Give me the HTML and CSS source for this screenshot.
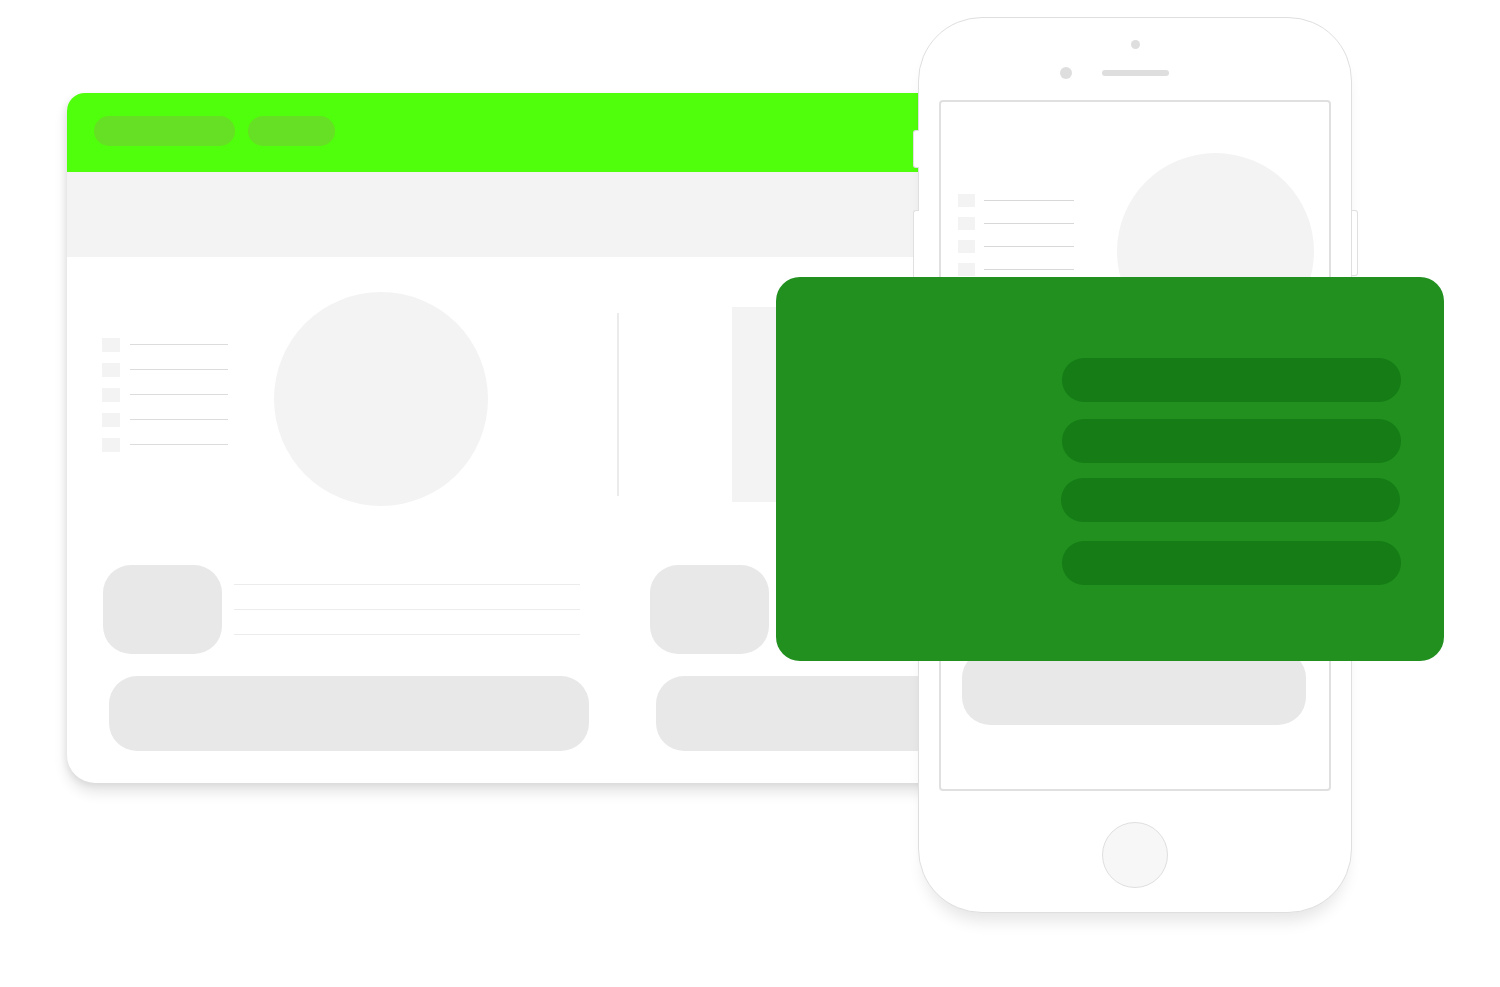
FILE: index.html
```html
<!DOCTYPE html>
<html lang="en">
<head>
<meta charset="utf-8">
<title>Devices illustration</title>
<link rel="stylesheet" href="styles.css">
</head>
<body>
<div class="stage">
  <div class="browser">
    <div class="browser-header">
      <span class="tab tab-wide"></span>
      <span class="tab tab-short"></span>
    </div>
    <div class="browser-toolbar"></div>
    <div class="browser-body">
      <div class="hero">
        <div class="list">
          <div class="list-row"><span class="sq"></span><span class="ln"></span></div>
          <div class="list-row"><span class="sq"></span><span class="ln"></span></div>
          <div class="list-row"><span class="sq"></span><span class="ln"></span></div>
          <div class="list-row"><span class="sq"></span><span class="ln"></span></div>
          <div class="list-row"><span class="sq"></span><span class="ln"></span></div>
        </div>
        <div class="circle"></div>
        <div class="divider"></div>
        <div class="panel"></div>
      </div>
      <div class="cards">
        <div class="card-col">
          <div class="media">
            <div class="thumb"></div>
            <div class="lines"><span></span><span></span><span></span></div>
          </div>
          <div class="pill"></div>
        </div>
        <div class="card-col">
          <div class="media">
            <div class="thumb"></div>
            <div class="lines"><span></span><span></span><span></span></div>
          </div>
          <div class="pill"></div>
        </div>
      </div>
    </div>
  </div>

  <div class="phone">
    <span class="side side-mute"></span>
    <span class="side side-vol"></span>
    <span class="side side-power"></span>
    <div class="phone-dot"></div>
    <div class="phone-top">
      <span class="front-cam"></span>
      <span class="speaker"></span>
    </div>
    <div class="screen">
      <div class="m-hero">
        <div class="m-list">
          <div class="m-row"><span class="m-sq"></span><span class="m-ln"></span></div>
          <div class="m-row"><span class="m-sq"></span><span class="m-ln"></span></div>
          <div class="m-row"><span class="m-sq"></span><span class="m-ln"></span></div>
          <div class="m-row"><span class="m-sq"></span><span class="m-ln"></span></div>
          <div class="m-row"><span class="m-sq"></span><span class="m-ln"></span></div>
        </div>
        <div class="m-circle"></div>
      </div>
      <div class="m-media">
        <div class="thumb"></div>
        <div class="m-lines"><span></span><span></span><span></span></div>
      </div>
      <div class="m-pill"></div>
    </div>
    <div class="home"></div>
  </div>

  <div class="menu-card">
    <span class="bar bar-1"></span>
    <span class="bar bar-2"></span>
    <span class="bar bar-3"></span>
    <span class="bar bar-4"></span>
  </div>
</div>
</body>
</html>
```

FILE: styles.css
```css
* { box-sizing: border-box; }
html, body { margin: 0; padding: 0; background: #ffffff; }
body { font-family: "Liberation Sans", Arial, sans-serif; }

.stage {
  position: relative;
  width: 1500px;
  height: 987px;
  overflow: hidden;
  background: #ffffff;
}

/* ---------- Browser window ---------- */
.browser {
  position: absolute;
  left: 67px;
  top: 93px;
  width: 1160px;
  height: 690px;
  background: #ffffff;
  border-radius: 18px 18px 28px 28px;
  box-shadow: 0 9px 14px rgba(0, 0, 0, 0.11), -2px 2px 6px rgba(0, 0, 0, 0.06);
  overflow: hidden;
  display: flex;
  flex-direction: column;
}
.browser-header {
  height: 79px;
  background: #50ff0b;
  display: flex;
  align-items: flex-start;
  gap: 13px;
  padding: 23px 0 0 27px;
}
.tab {
  display: block;
  height: 30px;
  border-radius: 15px;
  background: #66e024;
}
.tab-wide { width: 141px; }
.tab-short { width: 87px; }
.browser-toolbar {
  height: 85px;
  background: #f3f3f3;
}
.browser-body {
  flex: 1;
  display: flex;
  flex-direction: column;
}
.hero {
  display: flex;
  align-items: center;
  height: 214px;
  margin-top: 35px;
  padding-left: 35px;
}
.list {
  display: flex;
  flex-direction: column;
  gap: 11px;
  margin-bottom: 9px;
}
.list-row {
  display: flex;
  align-items: center;
  gap: 10px;
}
.sq {
  display: block;
  width: 18px;
  height: 14px;
  background: #f3f3f3;
}
.ln {
  display: block;
  width: 98px;
  height: 1px;
  background: #dcdcdc;
}
.circle {
  width: 214px;
  height: 214px;
  border-radius: 50%;
  background: #f3f3f3;
  margin-left: 46px;
  flex: none;
}
.divider {
  width: 2px;
  height: 183px;
  background: #ebebeb;
  margin-left: 129px;
  margin-top: 10px;
  flex: none;
}
.panel {
  width: 300px;
  height: 195px;
  background: #f3f3f3;
  margin-left: 113px;
  margin-top: 10px;
  flex: none;
}
.cards {
  display: grid;
  grid-template-columns: 547px 547px;
  margin-top: 59px;
  padding-left: 36px;
}
.card-col {
  display: flex;
  flex-direction: column;
}
.media {
  display: flex;
  align-items: flex-start;
}
.thumb {
  width: 119px;
  height: 89px;
  border-radius: 28px;
  background: #e8e8e8;
  flex: none;
}
.lines {
  display: flex;
  flex-direction: column;
  gap: 24px;
  margin-left: 12px;
  padding-top: 19px;
}
.lines span {
  display: block;
  width: 346px;
  height: 1px;
  background: #ececec;
}
.pill {
  width: 480px;
  height: 75px;
  border-radius: 28px;
  background: #e8e8e8;
  margin-top: 22px;
  margin-left: 6px;
}

/* ---------- Phone ---------- */
.phone {
  position: absolute;
  left: 918px;
  top: 17px;
  width: 434px;
  height: 896px;
  background: #ffffff;
  border: 1.5px solid #dfdfdf;
  border-radius: 64px;
  box-shadow: 0 14px 16px -6px rgba(0, 0, 0, 0.1);
  display: flex;
  flex-direction: column;
  align-items: center;
}
.side {
  position: absolute;
  width: 6px;
  background: #ffffff;
  border: 1.5px solid #e0e0e0;
}
.side-mute {
  left: -6.5px;
  top: 112px;
  height: 38px;
  border-right: none;
  border-radius: 3px 0 0 3px;
}
.side-vol {
  left: -6.5px;
  top: 192px;
  height: 70px;
  border-right: none;
  border-radius: 3px 0 0 3px;
}
.side-power {
  right: -6.5px;
  top: 192px;
  height: 66px;
  border-left: none;
  border-radius: 0 3px 3px 0;
}
.phone-dot {
  width: 9px;
  height: 9px;
  border-radius: 50%;
  background: #dedede;
  margin-top: 22px;
  flex: none;
}
.phone-top {
  display: grid;
  grid-template-columns: 1fr 67px 1fr;
  align-items: center;
  width: 100%;
  height: 12px;
  margin-top: 18px;
  flex: none;
}
.front-cam {
  justify-self: end;
  width: 12px;
  height: 12px;
  border-radius: 50%;
  background: #dedede;
  margin-right: 30px;
}
.speaker {
  display: block;
  width: 67px;
  height: 6px;
  border-radius: 3px;
  background: #dedede;
}
.screen {
  width: 392px;
  height: 691px;
  margin-top: 21px;
  border: 2px solid #e0e0e0;
  border-radius: 4px;
  background: #ffffff;
  flex: none;
  display: flex;
  flex-direction: column;
  align-items: center;
}
.m-hero {
  display: flex;
  align-items: center;
  align-self: stretch;
  padding-left: 17px;
  margin-top: 51px;
}
.m-list {
  display: flex;
  flex-direction: column;
  gap: 10px;
  margin-bottom: 10px;
}
.m-row {
  display: flex;
  align-items: center;
  gap: 9px;
}
.m-sq {
  display: block;
  width: 17px;
  height: 13px;
  background: #f3f3f3;
}
.m-ln {
  display: block;
  width: 90px;
  height: 1px;
  background: #d8d8d8;
}
.m-circle {
  width: 197px;
  height: 197px;
  border-radius: 50%;
  background: #f3f3f3;
  margin-left: 43px;
  flex: none;
}
.m-media {
  display: flex;
  align-items: flex-start;
  width: 344px;
  margin-top: 40px;
}
.m-lines {
  display: flex;
  flex-direction: column;
  gap: 24px;
  margin-left: 12px;
  padding-top: 19px;
}
.m-lines span {
  display: block;
  width: 200px;
  height: 1px;
  background: #ececec;
}
.m-pill {
  width: 344px;
  height: 75px;
  border-radius: 28px;
  background: #e8e8e8;
  margin-top: 171px;
  margin-left: -3px;
  flex: none;
}
.home {
  width: 66px;
  height: 66px;
  border-radius: 50%;
  background: #f7f7f7;
  border: 1.5px solid #dfdfdf;
  margin-top: 31px;
  flex: none;
}

/* ---------- Green overlay card ---------- */
.menu-card {
  position: absolute;
  left: 776px;
  top: 277px;
  width: 668px;
  height: 384px;
  border-radius: 24px;
  background: #21901f;
  display: flex;
  flex-direction: column;
  align-items: flex-end;
  padding: 81px 43px 0 0;
}
.bar {
  display: block;
  width: 339px;
  height: 44px;
  border-radius: 22px;
  background: #157c16;
  flex: none;
}
.bar-2 { margin-top: 17px; }
.bar-3 { margin-top: 15px; margin-right: 1px; }
.bar-4 { margin-top: 19px; }
```
